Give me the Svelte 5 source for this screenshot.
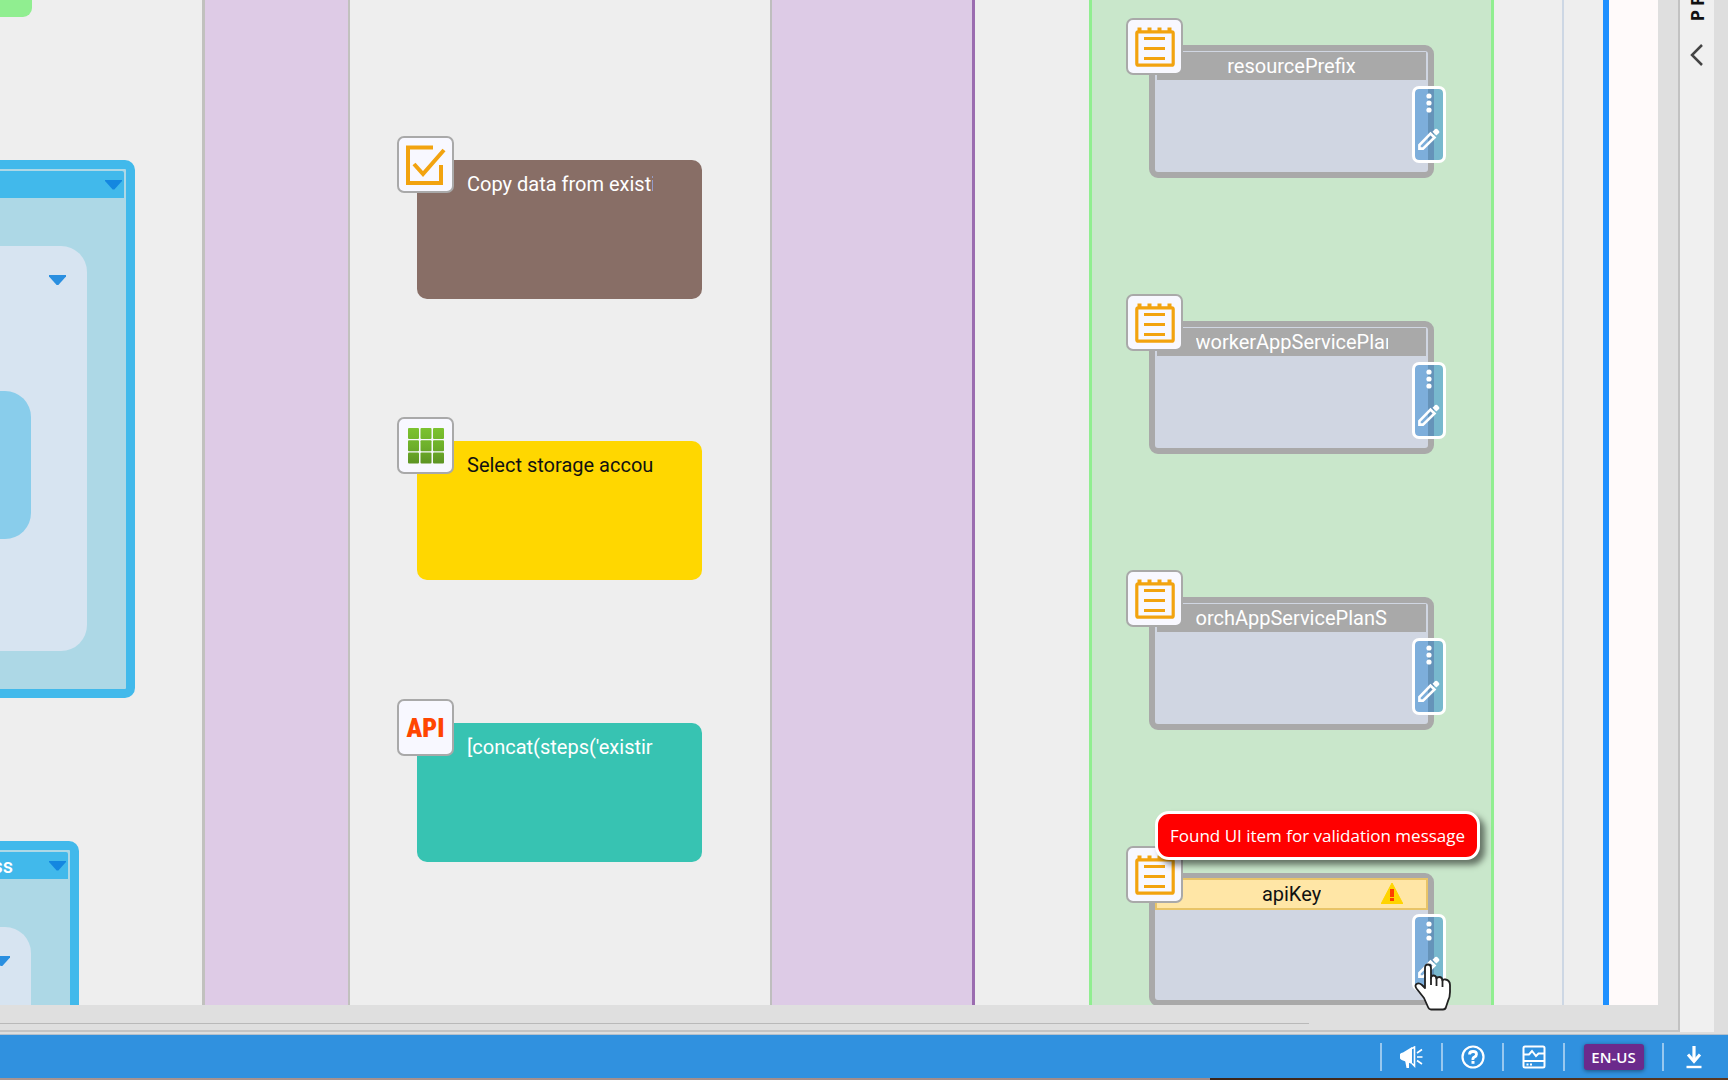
<script>
  let lang = "EN-US";

  // positions are canvas coordinates of the visible viewport
  const steps = [
    { x: 417, y: 160, label: "Copy data from existi", icon: "check", tone: "brown" },
    { x: 417, y: 441, label: "Select storage accou", icon: "grid", tone: "gold" },
    { x: 417, y: 723, label: "[concat(steps('existir", icon: "api", tone: "teal" }
  ];

  const params = [
    { x: 1149, y: 45, label: "resourcePrefix" },
    { x: 1149, y: 321, label: "workerAppServicePlan", long: true },
    { x: 1149, y: 597, label: "orchAppServicePlanS", long: true },
    { x: 1149, y: 873, label: "apiKey", warning: true }
  ];

  const lanes = ["start", "violet", "steps", "violet2", "gap", "green", "gap2", "gap3", "snow"];

  const cells = [0, 1, 2].flatMap((r) => [0, 1, 2].map((c) => ({ r, c })));
</script>

<div class="app">
  <div class="work">
    <main class="editor">
      <div class="canvas">
        <div class="lanes">
          {#each lanes as lane}
            <div class="lane {lane}"></div>
          {/each}
        </div>

        <div class="lime"></div>

        <section class="group big">
          <header>
            <button class="toggle" aria-label="Collapse group"></button>
          </header>
          <div class="inner">
            <button class="toggle soft" aria-label="Collapse section"></button>
            <div class="core"></div>
          </div>
        </section>

        <section class="group small">
          <header>
            <span>ss</span>
            <button class="toggle" aria-label="Collapse group"></button>
          </header>
          <div class="inner">
            <button class="toggle soft" aria-label="Collapse section"></button>
          </div>
        </section>

        {#each steps as step}
          <article class="step {step.tone}" style="left:{step.x}px; top:{step.y}px">
            <div class="badge">
              {#if step.icon === "check"}
                <svg viewBox="0 0 40 42" width="40" height="42" fill="none" stroke="#f2a30f" stroke-width="4">
                  <path d="M27 3.5H2V39H35V21" />
                  <path d="M8 20L17 30L38 6" />
                </svg>
              {:else if step.icon === "grid"}
                <svg viewBox="0 0 36 36" width="36" height="36">
                  <defs>
                    <linearGradient id="leaf" gradientUnits="userSpaceOnUse" x1="0" y1="0" x2="0" y2="36">
                      <stop offset="0" stop-color="#7cc230" />
                      <stop offset="0.5" stop-color="#6eb02b" />
                      <stop offset="1" stop-color="#5d9324" />
                    </linearGradient>
                  </defs>
                  {#each cells as cell}
                    <rect x={cell.c * 12.5} y={cell.r * 12.3} width="11" height="11" rx="1" fill="url(#leaf)" />
                  {/each}
                </svg>
              {:else}
                <span class="api">API</span>
              {/if}
            </div>
            <div class="label">{step.label}</div>
          </article>
        {/each}

        {#each params as param}
          <article class="param" class:warning={param.warning} style="left:{param.x}px; top:{param.y}px">
            <header>
              <span class="name" class:long={param.long}>{param.label}</span>
              {#if param.warning}
                <svg class="alert" viewBox="0 0 22 21" width="22" height="21">
                  <path d="M11 0L22 21H0Z" fill="#ffd400" stroke="#ffd400" stroke-linejoin="round" />
                  <rect x="9" y="6" width="4" height="8" fill="#ff3d00" />
                  <rect x="9" y="15" width="4" height="3" fill="#ff3d00" />
                </svg>
              {/if}
            </header>
            <div class="badge">
              <svg viewBox="0 0 40 40" width="40" height="40" fill="none" stroke="#f2a30f">
                <rect x="1.800" y="4.800" width="36.400" height="33.400" rx="1.500" stroke-width="3.200" />
                <path d="M4.500 0.500V5M14.500 0.500V5M24.500 0.500V5M34.500 0.500V5" stroke-width="4" />
                <path d="M9 11.500H30M9 21.500H30M9 31.500H30" stroke-width="2.800" />
              </svg>
            </div>
            <div class="tools">
              <button aria-label="More">
                <svg viewBox="0 0 20 20" width="20" height="20" fill="#fff">
                  <circle cx="10" cy="3" r="2.600" />
                  <circle cx="10" cy="10" r="2.600" />
                  <circle cx="10" cy="17" r="2.600" />
                </svg>
              </button>
              <button aria-label="Edit">
                <svg viewBox="0 0 22 22" width="22" height="22">
                  <path d="M1.400 20.600V17L12.500 5.500L16.500 9.500L5 20.600Z" fill="none" stroke="#fff" stroke-width="2.600" />
                  <path d="M14.500 3.800L17.200 1.100Q18.200 0.200 19.200 1.100L21 2.900Q21.900 3.900 21 4.900L18.300 7.600Z" fill="#fff" />
                </svg>
              </button>
            </div>
          </article>
        {/each}

        <div class="tip" role="tooltip">Found UI item for validation message</div>
      </div>

      <div class="hscroll"><div class="thumb"></div></div>
    </main>

    <aside class="side">
      <div class="title"><span>PR</span></div>
      <button aria-label="Expand panel">
        <svg viewBox="0 0 14 24" width="14" height="24" fill="none" stroke="#444" stroke-width="2.500">
          <path d="M12 2L2 12L12 22" />
        </svg>
      </button>
    </aside>

    <svg class="cursor" viewBox="0 0 38 48" width="38" height="48">
      <path
        d="M11 25V5Q11 1.500 14 1.500T17 5V15Q17 12.500 19.500 12.500T22.500 15.500Q23 14 25.500 14T28.500 17.500Q29 16 31.500 16.500Q36 17.500 36 22V29Q36 34 34 38L32 44Q31.500 46.500 29 46.500H17Q15 46.500 14 44L10 35L2.500 25.500Q0.500 22.500 2.500 21Q5 19.500 8 22Z"
        fill="#fff"
        stroke="#222"
        stroke-width="1.800"
        stroke-linejoin="round"
      />
      <path d="M17 14V22M22.500 15V23M28.500 17V24" stroke="#222" stroke-width="1.800" />
    </svg>
  </div>

  <footer class="status">
    <button aria-label="Announcements">
      <svg viewBox="0 0 23 22" width="23" height="22" fill="none" stroke="#fff">
        <path d="M0 8Q1 6.500 3 6.500L12 1V18L3 14.500Q1 14 0 12.500Z" fill="#fff" stroke="none" />
        <path d="M5 14H9V22H6.500Z" fill="#fff" stroke="none" />
        <path d="M12 2.500L14.500 1V20L12 17.500" stroke-width="1.600" />
        <path d="M17 7L22 3.500M17 11H22.500M17 14.500L22 18" stroke-width="1.600" />
      </svg>
    </button>
    <button aria-label="Help">
      <svg viewBox="0 0 24 24" width="24" height="24" fill="none" stroke="#fff">
        <circle cx="12" cy="12" r="10.500" stroke-width="2.200" />
        <path d="M8.500 9.500Q8.500 6.500 12 6.500T15.500 9.300Q15.500 11 13.500 12T12 15" stroke-width="2.800" />
        <rect x="10.500" y="16" width="3" height="2.800" fill="#fff" stroke="none" />
      </svg>
    </button>
    <button aria-label="Activity">
      <svg viewBox="0 0 24 24" width="24" height="24" fill="none" stroke="#fff" stroke-width="2">
        <rect x="1.500" y="1.500" width="21" height="21" rx="1.500" />
        <path d="M1.500 9.500H7L10 6L14 11L16.500 8.500H22.500M1.500 16H22.500" />
        <path d="M4.500 19.500H6.500M8 19.500H10" />
      </svg>
    </button>
    <div class="lang"><button>{lang}</button></div>
    <button class="last" aria-label="Download">
      <svg viewBox="0 0 16 24" width="16" height="24" fill="none" stroke="#fff">
        <path d="M8 1V16" stroke-width="3.200" />
        <path d="M2 9.500L8 16.500L14 9.500" stroke-width="3" />
        <path d="M0.500 22H15.500" stroke-width="2.400" />
      </svg>
    </button>
  </footer>
  <div class="desktop"></div>
</div>

<style>
  :global(body) {
    margin: 0;
    background: #dedede;
  }

  .app {
    height: 100vh;
    display: flex;
    flex-direction: column;
    overflow: hidden;
    font-family: Roboto, "Liberation Sans", sans-serif;
    background: #dedede;
  }

  button {
    border: 0;
    padding: 0;
    background: none;
    color: inherit;
    font: inherit;
    cursor: pointer;
  }

  svg {
    display: block;
  }

  .work {
    position: relative;
    flex: 1;
    min-height: 0;
    display: flex;
    padding: 0 14px 2px 0;
    border-bottom: 1px solid #b4c0cc;
  }

  .editor {
    flex: 1;
    min-width: 0;
    display: flex;
    flex-direction: column;
    background: #dfdfdf;
    border-right: 2px solid #c2c2c2;
    border-bottom: 2px solid #c4c4c4;
  }

  .canvas {
    position: relative;
    flex: 1;
    min-height: 0;
    margin-right: 20px;
    overflow: hidden;
    background: #eee;
  }

  .lanes {
    display: flex;
    height: 100%;
  }

  .lane {
    box-sizing: border-box;
    flex: none;
  }

  .start { width: 202px; }

  .violet {
    width: 148px;
    background: #decbe6;
    border: solid #c1c1be;
    border-width: 0 2px 0 3px;
  }

  .steps { width: 420px; }

  .violet2 {
    width: 205px;
    background: #ddcbe6;
    border-left: 2px solid #bebebe;
    border-right: 3px solid #9b6cb0;
  }

  .gap { width: 114px; }

  .green {
    width: 405px;
    background: #c9e7cb;
    border: solid #90ee90;
    border-width: 0 3px;
  }

  .gap2 {
    width: 70px;
    border-right: 2px solid #cdd7e4;
  }

  .gap3 {
    width: 45px;
    border-right: 6px solid #1e90ff;
  }

  .snow {
    flex: 1;
    background: #fffafa;
  }

  .lime {
    position: absolute;
    left: -60px;
    top: -60px;
    width: 92px;
    height: 77px;
    border-radius: 9px;
    background: #90ee90;
  }

  .group {
    position: absolute;
    box-sizing: border-box;
    left: -60px;
    border: 9px solid #41b9eb;
    border-radius: 10px;
    background: #add8e6;
  }

  .group.big {
    top: 160px;
    width: 195px;
    height: 538px;
  }

  .group.small {
    top: 841px;
    width: 139px;
    height: 300px;
  }

  .group header {
    display: flex;
    align-items: center;
    justify-content: flex-end;
    gap: 36px;
    height: 27px;
    margin: 2px 2px 0 0;
    padding-right: 2px;
    border-radius: 0 2px 0 0;
    background: #41b9eb;
    color: #fff;
    font-size: 20px;
    font-weight: 500;
  }

  .toggle {
    width: 17px;
    height: 10px;
    background: #1487e0;
    clip-path: polygon(0 0, 100% 0, 100% 15%, 55% 100%, 45% 100%, 0 15%);
  }

  .toggle.soft {
    background: #2a8fe0;
  }

  .inner {
    display: flex;
    flex-direction: column;
    align-items: flex-end;
    box-sizing: border-box;
    height: 405px;
    margin: 48px 39px 0 0;
    padding-top: 29px;
    border-radius: 26px;
    background: #d7e4f1;
  }

  .inner .toggle {
    margin-right: 21px;
  }

  .core {
    width: 82px;
    height: 148px;
    margin: 106px 56px 0 0;
    border-radius: 26px;
    background: #89cdeb;
  }

  .step {
    position: absolute;
    box-sizing: border-box;
    width: 285px;
    height: 139px;
    padding: 10px 49px 0 50px;
    border-radius: 10px;
  }

  .brown { background: #886e66; color: #fff; }
  .gold { background: #ffd700; color: #111; }
  .teal { background: #37c3b2; color: #fff; }

  .label {
    overflow: hidden;
    white-space: nowrap;
    font-size: 20px;
    line-height: 28px;
  }

  .badge {
    position: absolute;
    left: -20px;
    top: -24px;
    box-sizing: border-box;
    width: 57px;
    height: 57px;
    display: flex;
    align-items: center;
    justify-content: center;
    border: 2px solid #a9a9a9;
    border-radius: 7px;
    background: #f8f8ff;
  }

  .api {
    color: #ff4500;
    font-family: "Roboto Condensed", Roboto, sans-serif;
    font-size: 26px;
    font-weight: 900;
    line-height: 40px;
  }

  .param {
    position: absolute;
    box-sizing: border-box;
    width: 285px;
    height: 133px;
    border: 6px solid #a9a9a9;
    border-radius: 9px;
    background: #d0d6e2;
  }

  .param header {
    display: flex;
    align-items: center;
    justify-content: center;
    height: 28px;
    margin: 1px 2px 0;
    background: #a9a9a9;
    color: #fff;
    font-size: 20px;
    line-height: 28px;
  }

  .param.warning header {
    margin: -1px 0 0;
    border: 2px solid #e8c468;
    background: #ffe6a6;
    color: #111;
  }

  .name {
    overflow: hidden;
    white-space: nowrap;
  }

  .name.long {
    width: 192px;
  }

  .alert {
    position: absolute;
    right: 25px;
    top: 4px;
  }

  .param .badge {
    left: -29px;
    top: -33px;
  }

  .tools {
    position: absolute;
    left: 257px;
    top: 35px;
    box-sizing: border-box;
    width: 34px;
    height: 77px;
    display: flex;
    flex-direction: column;
    align-items: center;
    justify-content: space-between;
    padding: 4px 0 10px;
    border: 3px solid #fff;
    border-radius: 7px;
    background: rgba(0, 114, 210, 0.4);
    background-clip: padding-box;
  }

  .tip {
    position: absolute;
    left: 1155px;
    top: 811px;
    padding: 9px 12px 8px;
    border: 3px solid #fff;
    border-radius: 14px;
    background: #f00;
    color: #fff;
    box-shadow: 5px 5px 6px rgba(0, 0, 0, 0.5);
    font-family: "Open Sans", "Noto Sans", sans-serif;
    font-size: 17px;
    line-height: 26px;
    white-space: nowrap;
  }

  .hscroll {
    height: 25px;
    padding-top: 18px;
    box-sizing: border-box;
  }

  .thumb {
    width: 78%;
    height: 7px;
    border-top: 1px solid #b9b9b9;
    box-sizing: border-box;
  }

  .side {
    width: 34px;
    display: flex;
    flex-direction: column;
    align-items: center;
    gap: 22px;
    background: #f0f0f0;
  }

  .title {
    display: flex;
    align-items: flex-end;
    height: 21px;
    overflow: hidden;
    color: #111;
    font-family: "Open Sans", sans-serif;
    font-size: 18px;
    font-weight: 700;
    letter-spacing: 4px;
    line-height: 24px;
  }

  .title span {
    writing-mode: vertical-rl;
    transform: rotate(180deg);
  }

  .cursor {
    position: absolute;
    left: 1414px;
    top: 963px;
    pointer-events: none;
  }

  .status {
    display: flex;
    align-items: center;
    justify-content: flex-end;
    height: 43px;
    background: #3091df;
    color: #fff;
  }

  .status > * {
    box-sizing: border-box;
    width: 61px;
    height: 28px;
    display: flex;
    align-items: center;
    justify-content: center;
    border-left: 2px solid #98c8ef;
  }

  .status > .lang {
    width: 99px;
  }

  .status > .last {
    width: 66px;
    padding-right: 4px;
  }

  .lang button {
    width: 60px;
    height: 26px;
    border-radius: 3px;
    background: #6b2a8c;
    box-shadow: 0 1px 4px rgba(0, 0, 0, 0.45);
    font-family: "Open Sans", "Noto Sans", sans-serif;
    font-size: 15px;
    font-weight: 600;
    line-height: 26px;
  }

  .desktop {
    height: 2px;
    background: linear-gradient(to right, #a89490 0, #a08a88 70%, #3a2418 70%, #5a3820 100%);
  }
</style>
